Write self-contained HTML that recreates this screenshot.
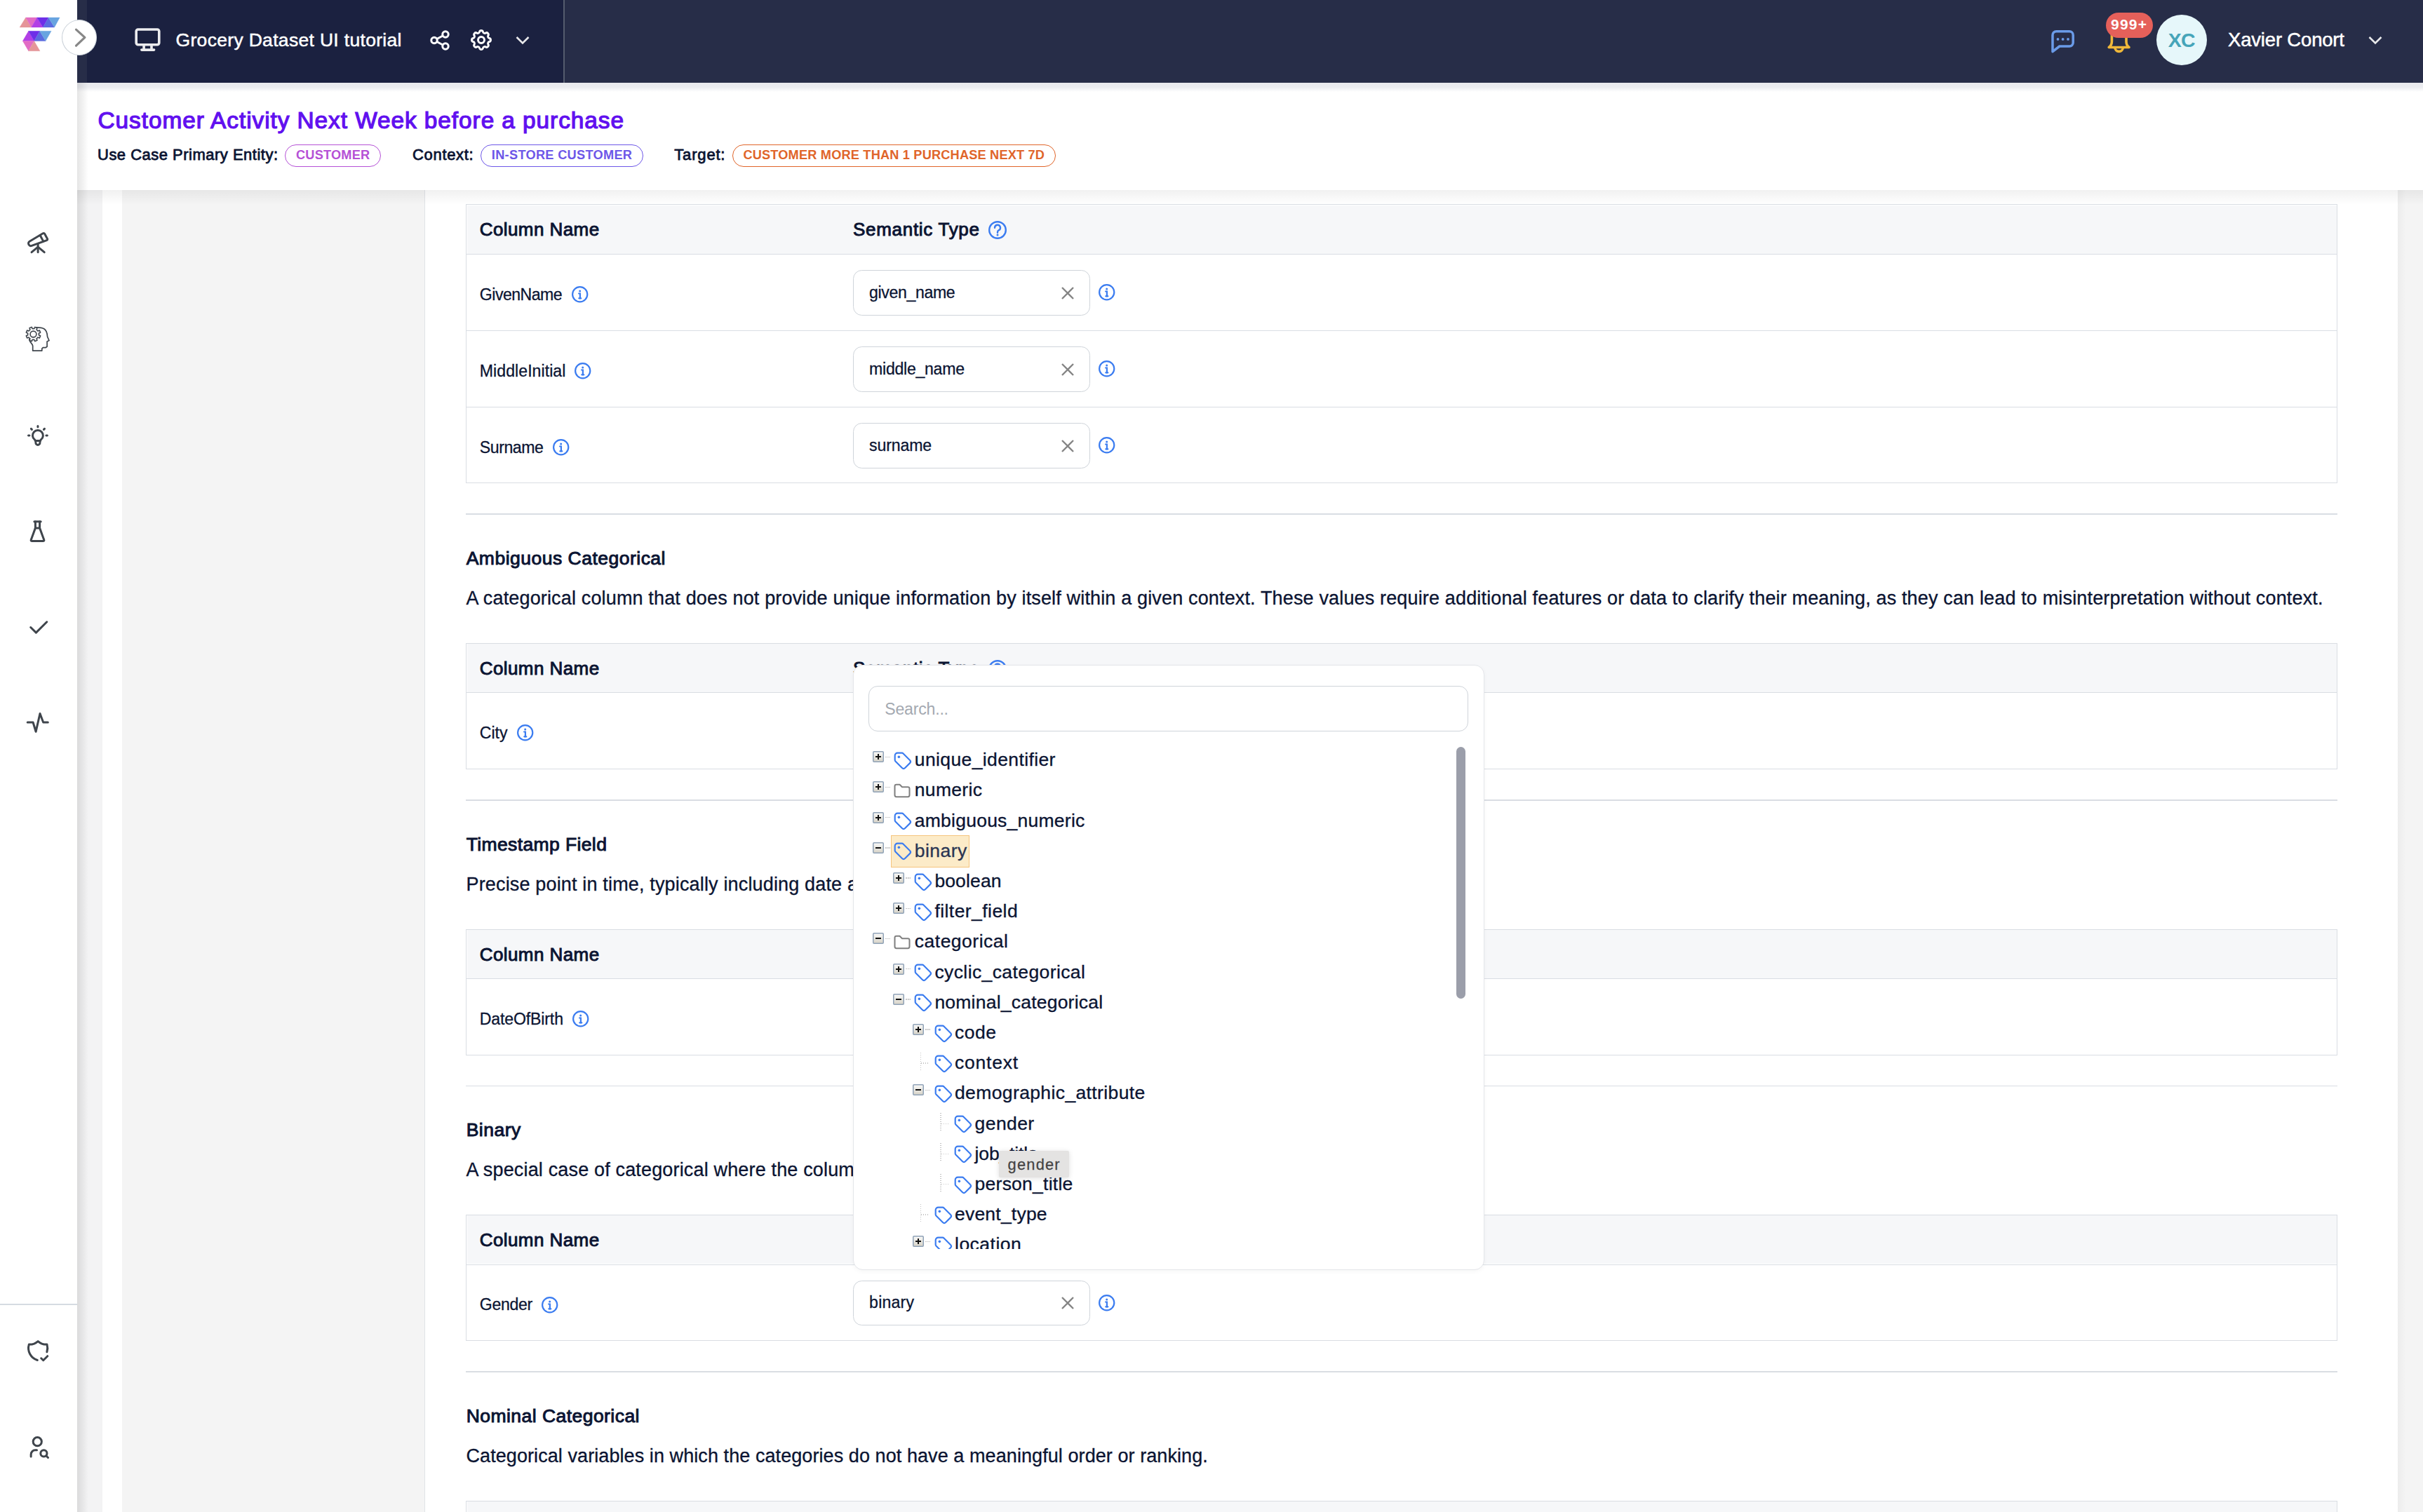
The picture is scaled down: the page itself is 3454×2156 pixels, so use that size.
<!DOCTYPE html>
<html><head><meta charset="utf-8"><style>
html,body{margin:0;padding:0}
body{width:3454px;height:2156px;overflow:hidden;position:relative;background:#fff;font-family:"Liberation Sans",sans-serif}
.t{position:absolute;white-space:nowrap}
.r{position:absolute}
</style></head><body>
<div class="r" style="left:110px;top:271px;width:36px;height:1885px;background:#f3f3f4"></div>
<div class="r" style="left:146px;top:271px;width:28px;height:1885px;background:#ffffff"></div>
<div class="r" style="left:174px;top:271px;width:431px;height:1885px;background:#f4f4f4;border-right:1.5px solid #e1e3e7"></div>
<div class="r" style="left:606.5px;top:271px;width:2811.5px;height:1885px;background:#ffffff"></div>
<div class="r" style="left:3418px;top:271px;width:36px;height:1885px;background:#f4f4f4"></div>
<div class="r" style="left:3418px;top:271px;width:12px;height:1885px;background:linear-gradient(90deg,rgba(0,0,0,0.03),rgba(0,0,0,0))"></div>
<div class="r" style="left:110px;top:271px;width:3344px;height:21px;background:linear-gradient(180deg,rgba(0,0,0,0.055),rgba(0,0,0,0))"></div>
<div class="r" style="left:664px;top:291.3px;width:2668px;height:397.99999999999994px;border:1.5px solid #d9dde3;box-sizing:border-box"></div>
<div class="r" style="left:665.5px;top:292.8px;width:2665.0px;height:69.09999999999997px;background:#f6f7f9"></div>
<div class="r" style="left:664px;top:361.9px;width:2668px;height:1.2000000000000455px;background:#d9dde3"></div>
<div id="t1" class="t" style="left:683.7px;top:314.20px;font-size:26px;line-height:26px;font-weight:400;color:#0b1432;letter-spacing:0.423px;-webkit-text-stroke:0.96px #0b1432;">Column Name</div>
<div id="t2" class="t" style="left:1216px;top:314.20px;font-size:26px;line-height:26px;font-weight:400;color:#0b1432;letter-spacing:0.707px;-webkit-text-stroke:0.96px #0b1432;">Semantic Type</div>
<svg class="r" style="left:1407.0px;top:313.3px;" width="30" height="30" viewBox="0 0 30 30" fill="none"><circle cx="15.0" cy="15.0" r="11.8" stroke="#3b7cf0" stroke-width="2.4"/><path d="M11.0 11.8a4 4 0 1 1 5.6 3.6c-1.2.6-1.6 1.2-1.6 2.6v.8" stroke="#3b7cf0" stroke-width="2.4" stroke-linecap="round"/><circle cx="15.0" cy="22.0" r="1.5" fill="#3b7cf0"/></svg>
<div id="t3" class="t" style="left:683.8px;top:408.67px;font-size:23.1px;line-height:23.1px;font-weight:400;color:#0b1432;letter-spacing:-0.505px;-webkit-text-stroke:0.28px #0b1432;">GivenName</div>
<svg class="r" style="left:812.6999999999999px;top:406.0px;" width="27.4" height="27.4" viewBox="0 0 27.4 27.4" fill="none"><circle cx="13.7" cy="13.7" r="10.6" stroke="#3b7cf0" stroke-width="2.2"/><circle cx="13.7" cy="9.1" r="1.5" fill="#3b7cf0"/><path d="M12.1 12.5h1.8v6.8" stroke="#3b7cf0" stroke-width="2.2" stroke-linecap="round"/><path d="M12.299999999999999 19.299999999999997h3" stroke="#3b7cf0" stroke-width="2.2" stroke-linecap="round"/></svg>
<div class="r" style="left:1216.3px;top:385.3px;width:337.29999999999995px;height:64.5px;border:1.6px solid #cfd4da;border-radius:12.5px;box-sizing:border-box;background:#fff"></div>
<div id="t4" class="t" style="left:1239.1px;top:405.67px;font-size:23.1px;line-height:23.1px;font-weight:400;color:#0b1432;letter-spacing:-0.359px;-webkit-text-stroke:0.28px #0b1432;">given_name</div>
<svg class="r" style="left:1511.5px;top:407.6px;" width="20" height="20" viewBox="0 0 20 20" fill="none"><path d="M2 2l16 16M18 2L2 18" stroke="#858585" stroke-width="2.4"/></svg>
<svg class="r" style="left:1563.6px;top:403.1px;" width="27.4" height="27.4" viewBox="0 0 27.4 27.4" fill="none"><circle cx="13.7" cy="13.7" r="10.6" stroke="#3b7cf0" stroke-width="2.2"/><circle cx="13.7" cy="9.1" r="1.5" fill="#3b7cf0"/><path d="M12.1 12.5h1.8v6.8" stroke="#3b7cf0" stroke-width="2.2" stroke-linecap="round"/><path d="M12.299999999999999 19.299999999999997h3" stroke="#3b7cf0" stroke-width="2.2" stroke-linecap="round"/></svg>
<div class="r" style="left:664px;top:470.55px;width:2668px;height:1.5px;background:#d9dde3"></div>
<div id="t5" class="t" style="left:683.8px;top:517.66px;font-size:23.1px;line-height:23.1px;font-weight:400;color:#0b1432;letter-spacing:0.054px;-webkit-text-stroke:0.28px #0b1432;">MiddleInitial</div>
<svg class="r" style="left:817.4px;top:514.9999999999999px;" width="27.4" height="27.4" viewBox="0 0 27.4 27.4" fill="none"><circle cx="13.7" cy="13.7" r="10.6" stroke="#3b7cf0" stroke-width="2.2"/><circle cx="13.7" cy="9.1" r="1.5" fill="#3b7cf0"/><path d="M12.1 12.5h1.8v6.8" stroke="#3b7cf0" stroke-width="2.2" stroke-linecap="round"/><path d="M12.299999999999999 19.299999999999997h3" stroke="#3b7cf0" stroke-width="2.2" stroke-linecap="round"/></svg>
<div class="r" style="left:1216.3px;top:494.3px;width:337.29999999999995px;height:64.49999999999994px;border:1.6px solid #cfd4da;border-radius:12.5px;box-sizing:border-box;background:#fff"></div>
<div id="t6" class="t" style="left:1239.1px;top:514.66px;font-size:23.1px;line-height:23.1px;font-weight:400;color:#0b1432;letter-spacing:-0.276px;-webkit-text-stroke:0.28px #0b1432;">middle_name</div>
<svg class="r" style="left:1511.5px;top:516.6px;" width="20" height="20" viewBox="0 0 20 20" fill="none"><path d="M2 2l16 16M18 2L2 18" stroke="#858585" stroke-width="2.4"/></svg>
<svg class="r" style="left:1563.6px;top:512.0999999999999px;" width="27.4" height="27.4" viewBox="0 0 27.4 27.4" fill="none"><circle cx="13.7" cy="13.7" r="10.6" stroke="#3b7cf0" stroke-width="2.2"/><circle cx="13.7" cy="9.1" r="1.5" fill="#3b7cf0"/><path d="M12.1 12.5h1.8v6.8" stroke="#3b7cf0" stroke-width="2.2" stroke-linecap="round"/><path d="M12.299999999999999 19.299999999999997h3" stroke="#3b7cf0" stroke-width="2.2" stroke-linecap="round"/></svg>
<div class="r" style="left:664px;top:579.55px;width:2668px;height:1.5px;background:#d9dde3"></div>
<div id="t7" class="t" style="left:683.8px;top:626.66px;font-size:23.1px;line-height:23.1px;font-weight:400;color:#0b1432;letter-spacing:-0.436px;-webkit-text-stroke:0.28px #0b1432;">Surname</div>
<svg class="r" style="left:785.9px;top:623.9999999999999px;" width="27.4" height="27.4" viewBox="0 0 27.4 27.4" fill="none"><circle cx="13.7" cy="13.7" r="10.6" stroke="#3b7cf0" stroke-width="2.2"/><circle cx="13.7" cy="9.1" r="1.5" fill="#3b7cf0"/><path d="M12.1 12.5h1.8v6.8" stroke="#3b7cf0" stroke-width="2.2" stroke-linecap="round"/><path d="M12.299999999999999 19.299999999999997h3" stroke="#3b7cf0" stroke-width="2.2" stroke-linecap="round"/></svg>
<div class="r" style="left:1216.3px;top:603.3px;width:337.29999999999995px;height:64.5px;border:1.6px solid #cfd4da;border-radius:12.5px;box-sizing:border-box;background:#fff"></div>
<div id="t8" class="t" style="left:1239.1px;top:623.66px;font-size:23.1px;line-height:23.1px;font-weight:400;color:#0b1432;letter-spacing:-0.143px;-webkit-text-stroke:0.28px #0b1432;">surname</div>
<svg class="r" style="left:1511.5px;top:625.5999999999999px;" width="20" height="20" viewBox="0 0 20 20" fill="none"><path d="M2 2l16 16M18 2L2 18" stroke="#858585" stroke-width="2.4"/></svg>
<svg class="r" style="left:1563.6px;top:621.0999999999999px;" width="27.4" height="27.4" viewBox="0 0 27.4 27.4" fill="none"><circle cx="13.7" cy="13.7" r="10.6" stroke="#3b7cf0" stroke-width="2.2"/><circle cx="13.7" cy="9.1" r="1.5" fill="#3b7cf0"/><path d="M12.1 12.5h1.8v6.8" stroke="#3b7cf0" stroke-width="2.2" stroke-linecap="round"/><path d="M12.299999999999999 19.299999999999997h3" stroke="#3b7cf0" stroke-width="2.2" stroke-linecap="round"/></svg>
<div class="r" style="left:664px;top:732.25px;width:2668px;height:1.5px;background:#d9dde3"></div>
<div id="t9" class="t" style="left:664.7px;top:782.77px;font-size:26.5px;line-height:26.5px;font-weight:400;color:#0b1432;letter-spacing:0.491px;-webkit-text-stroke:0.98px #0b1432;">Ambiguous Categorical</div>
<div id="t10" class="t" style="left:664.5px;top:840.05px;font-size:27px;line-height:27px;font-weight:400;color:#0b1432;letter-spacing:0.154px;-webkit-text-stroke:0.32px #0b1432;">A categorical column that does not provide unique information by itself within a given context. These values require additional features or data to clarify their meaning, as they can lead to misinterpretation without context.</div>
<div class="r" style="left:664px;top:916.6px;width:2668px;height:179.9999999999999px;border:1.5px solid #d9dde3;box-sizing:border-box"></div>
<div class="r" style="left:665.5px;top:918.1px;width:2665.0px;height:69.10000000000002px;background:#f6f7f9"></div>
<div class="r" style="left:664px;top:987.2px;width:2668px;height:1.1999999999999318px;background:#d9dde3"></div>
<div id="t11" class="t" style="left:683.7px;top:939.50px;font-size:26px;line-height:26px;font-weight:400;color:#0b1432;letter-spacing:0.423px;-webkit-text-stroke:0.96px #0b1432;">Column Name</div>
<div id="t12" class="t" style="left:1216px;top:939.50px;font-size:26px;line-height:26px;font-weight:400;color:#0b1432;letter-spacing:0.707px;-webkit-text-stroke:0.96px #0b1432;">Semantic Type</div>
<svg class="r" style="left:1407.0px;top:938.6px;" width="30" height="30" viewBox="0 0 30 30" fill="none"><circle cx="15.0" cy="15.0" r="11.8" stroke="#3b7cf0" stroke-width="2.4"/><path d="M11.0 11.8a4 4 0 1 1 5.6 3.6c-1.2.6-1.6 1.2-1.6 2.6v.8" stroke="#3b7cf0" stroke-width="2.4" stroke-linecap="round"/><circle cx="15.0" cy="22.0" r="1.5" fill="#3b7cf0"/></svg>
<div id="t13" class="t" style="left:683.8px;top:1033.96px;font-size:23.1px;line-height:23.1px;font-weight:400;color:#0b1432;letter-spacing:-0.027px;-webkit-text-stroke:0.28px #0b1432;">City</div>
<svg class="r" style="left:734.5px;top:1031.3px;" width="27.4" height="27.4" viewBox="0 0 27.4 27.4" fill="none"><circle cx="13.7" cy="13.7" r="10.6" stroke="#3b7cf0" stroke-width="2.2"/><circle cx="13.7" cy="9.1" r="1.5" fill="#3b7cf0"/><path d="M12.1 12.5h1.8v6.8" stroke="#3b7cf0" stroke-width="2.2" stroke-linecap="round"/><path d="M12.299999999999999 19.299999999999997h3" stroke="#3b7cf0" stroke-width="2.2" stroke-linecap="round"/></svg>
<div class="r" style="left:1216.3px;top:1010.6px;width:337.29999999999995px;height:64.49999999999989px;border:1.6px solid #cfd4da;border-radius:12.5px;box-sizing:border-box;background:#fff"></div>
<div id="t14" class="t" style="left:1239.1px;top:1030.96px;font-size:23.1px;line-height:23.1px;font-weight:400;color:#0b1432;letter-spacing:3.120px;-webkit-text-stroke:0.28px #0b1432;">city</div>
<svg class="r" style="left:1511.5px;top:1032.9px;" width="20" height="20" viewBox="0 0 20 20" fill="none"><path d="M2 2l16 16M18 2L2 18" stroke="#858585" stroke-width="2.4"/></svg>
<svg class="r" style="left:1563.6px;top:1028.3999999999999px;" width="27.4" height="27.4" viewBox="0 0 27.4 27.4" fill="none"><circle cx="13.7" cy="13.7" r="10.6" stroke="#3b7cf0" stroke-width="2.2"/><circle cx="13.7" cy="9.1" r="1.5" fill="#3b7cf0"/><path d="M12.1 12.5h1.8v6.8" stroke="#3b7cf0" stroke-width="2.2" stroke-linecap="round"/><path d="M12.299999999999999 19.299999999999997h3" stroke="#3b7cf0" stroke-width="2.2" stroke-linecap="round"/></svg>
<div class="r" style="left:664px;top:1140.25px;width:2668px;height:1.5px;background:#d9dde3"></div>
<div id="t15" class="t" style="left:664.7px;top:1190.77px;font-size:26.5px;line-height:26.5px;font-weight:400;color:#0b1432;letter-spacing:0.380px;-webkit-text-stroke:0.98px #0b1432;">Timestamp Field</div>
<div id="t16" class="t" style="left:664.5px;top:1248.05px;font-size:27px;line-height:27px;font-weight:400;color:#0b1432;letter-spacing:0.160px;-webkit-text-stroke:0.32px #0b1432;">Precise point in time, typically including date and time information.</div>
<div class="r" style="left:664px;top:1324.6px;width:2668px;height:180.0px;border:1.5px solid #d9dde3;box-sizing:border-box"></div>
<div class="r" style="left:665.5px;top:1326.1px;width:2665.0px;height:69.09999999999991px;background:#f6f7f9"></div>
<div class="r" style="left:664px;top:1395.1999999999998px;width:2668px;height:1.2000000000000455px;background:#d9dde3"></div>
<div id="t17" class="t" style="left:683.7px;top:1347.50px;font-size:26px;line-height:26px;font-weight:400;color:#0b1432;letter-spacing:0.423px;-webkit-text-stroke:0.96px #0b1432;">Column Name</div>
<div id="t18" class="t" style="left:1216px;top:1347.50px;font-size:26px;line-height:26px;font-weight:400;color:#0b1432;letter-spacing:0.707px;-webkit-text-stroke:0.96px #0b1432;">Semantic Type</div>
<svg class="r" style="left:1407.0px;top:1346.6px;" width="30" height="30" viewBox="0 0 30 30" fill="none"><circle cx="15.0" cy="15.0" r="11.8" stroke="#3b7cf0" stroke-width="2.4"/><path d="M11.0 11.8a4 4 0 1 1 5.6 3.6c-1.2.6-1.6 1.2-1.6 2.6v.8" stroke="#3b7cf0" stroke-width="2.4" stroke-linecap="round"/><circle cx="15.0" cy="22.0" r="1.5" fill="#3b7cf0"/></svg>
<div id="t19" class="t" style="left:683.8px;top:1441.96px;font-size:23.1px;line-height:23.1px;font-weight:400;color:#0b1432;letter-spacing:-0.146px;-webkit-text-stroke:0.28px #0b1432;">DateOfBirth</div>
<svg class="r" style="left:814.0px;top:1439.3px;" width="27.4" height="27.4" viewBox="0 0 27.4 27.4" fill="none"><circle cx="13.7" cy="13.7" r="10.6" stroke="#3b7cf0" stroke-width="2.2"/><circle cx="13.7" cy="9.1" r="1.5" fill="#3b7cf0"/><path d="M12.1 12.5h1.8v6.8" stroke="#3b7cf0" stroke-width="2.2" stroke-linecap="round"/><path d="M12.299999999999999 19.299999999999997h3" stroke="#3b7cf0" stroke-width="2.2" stroke-linecap="round"/></svg>
<div class="r" style="left:1216.3px;top:1418.6px;width:337.29999999999995px;height:64.5px;border:1.6px solid #cfd4da;border-radius:12.5px;box-sizing:border-box;background:#fff"></div>
<div id="t20" class="t" style="left:1239.1px;top:1438.96px;font-size:23.1px;line-height:23.1px;font-weight:400;color:#0b1432;letter-spacing:0.590px;-webkit-text-stroke:0.28px #0b1432;">timestamp_field</div>
<svg class="r" style="left:1511.5px;top:1440.8999999999999px;" width="20" height="20" viewBox="0 0 20 20" fill="none"><path d="M2 2l16 16M18 2L2 18" stroke="#858585" stroke-width="2.4"/></svg>
<svg class="r" style="left:1563.6px;top:1436.3999999999999px;" width="27.4" height="27.4" viewBox="0 0 27.4 27.4" fill="none"><circle cx="13.7" cy="13.7" r="10.6" stroke="#3b7cf0" stroke-width="2.2"/><circle cx="13.7" cy="9.1" r="1.5" fill="#3b7cf0"/><path d="M12.1 12.5h1.8v6.8" stroke="#3b7cf0" stroke-width="2.2" stroke-linecap="round"/><path d="M12.299999999999999 19.299999999999997h3" stroke="#3b7cf0" stroke-width="2.2" stroke-linecap="round"/></svg>
<div class="r" style="left:664px;top:1547.55px;width:2668px;height:1.5px;background:#d9dde3"></div>
<div id="t21" class="t" style="left:664.7px;top:1598.07px;font-size:26.5px;line-height:26.5px;font-weight:400;color:#0b1432;letter-spacing:0.495px;-webkit-text-stroke:0.98px #0b1432;">Binary</div>
<div id="t22" class="t" style="left:664.5px;top:1655.35px;font-size:27px;line-height:27px;font-weight:400;color:#0b1432;letter-spacing:0.160px;-webkit-text-stroke:0.32px #0b1432;">A special case of categorical where the column has only two distinct values.</div>
<div class="r" style="left:664px;top:1731.8999999999999px;width:2668px;height:180.0px;border:1.5px solid #d9dde3;box-sizing:border-box"></div>
<div class="r" style="left:665.5px;top:1733.3999999999999px;width:2665.0px;height:69.09999999999991px;background:#f6f7f9"></div>
<div class="r" style="left:664px;top:1802.4999999999998px;width:2668px;height:1.2000000000000455px;background:#d9dde3"></div>
<div id="t23" class="t" style="left:683.7px;top:1754.80px;font-size:26px;line-height:26px;font-weight:400;color:#0b1432;letter-spacing:0.423px;-webkit-text-stroke:0.96px #0b1432;">Column Name</div>
<div id="t24" class="t" style="left:1216px;top:1754.80px;font-size:26px;line-height:26px;font-weight:400;color:#0b1432;letter-spacing:0.707px;-webkit-text-stroke:0.96px #0b1432;">Semantic Type</div>
<svg class="r" style="left:1407.0px;top:1753.8999999999999px;" width="30" height="30" viewBox="0 0 30 30" fill="none"><circle cx="15.0" cy="15.0" r="11.8" stroke="#3b7cf0" stroke-width="2.4"/><path d="M11.0 11.8a4 4 0 1 1 5.6 3.6c-1.2.6-1.6 1.2-1.6 2.6v.8" stroke="#3b7cf0" stroke-width="2.4" stroke-linecap="round"/><circle cx="15.0" cy="22.0" r="1.5" fill="#3b7cf0"/></svg>
<div id="t25" class="t" style="left:683.8px;top:1849.26px;font-size:23.1px;line-height:23.1px;font-weight:400;color:#0b1432;letter-spacing:-0.306px;-webkit-text-stroke:0.28px #0b1432;">Gender</div>
<svg class="r" style="left:770.3px;top:1846.6px;" width="27.4" height="27.4" viewBox="0 0 27.4 27.4" fill="none"><circle cx="13.7" cy="13.7" r="10.6" stroke="#3b7cf0" stroke-width="2.2"/><circle cx="13.7" cy="9.1" r="1.5" fill="#3b7cf0"/><path d="M12.1 12.5h1.8v6.8" stroke="#3b7cf0" stroke-width="2.2" stroke-linecap="round"/><path d="M12.299999999999999 19.299999999999997h3" stroke="#3b7cf0" stroke-width="2.2" stroke-linecap="round"/></svg>
<div class="r" style="left:1216.3px;top:1825.8999999999999px;width:337.29999999999995px;height:64.5px;border:1.6px solid #cfd4da;border-radius:12.5px;box-sizing:border-box;background:#fff"></div>
<div id="t26" class="t" style="left:1239.1px;top:1846.26px;font-size:23.1px;line-height:23.1px;font-weight:400;color:#0b1432;letter-spacing:0.199px;-webkit-text-stroke:0.28px #0b1432;">binary</div>
<svg class="r" style="left:1511.5px;top:1848.1999999999998px;" width="20" height="20" viewBox="0 0 20 20" fill="none"><path d="M2 2l16 16M18 2L2 18" stroke="#858585" stroke-width="2.4"/></svg>
<svg class="r" style="left:1563.6px;top:1843.6999999999998px;" width="27.4" height="27.4" viewBox="0 0 27.4 27.4" fill="none"><circle cx="13.7" cy="13.7" r="10.6" stroke="#3b7cf0" stroke-width="2.2"/><circle cx="13.7" cy="9.1" r="1.5" fill="#3b7cf0"/><path d="M12.1 12.5h1.8v6.8" stroke="#3b7cf0" stroke-width="2.2" stroke-linecap="round"/><path d="M12.299999999999999 19.299999999999997h3" stroke="#3b7cf0" stroke-width="2.2" stroke-linecap="round"/></svg>
<div class="r" style="left:664px;top:1955.25px;width:2668px;height:1.5px;background:#d9dde3"></div>
<div id="t27" class="t" style="left:664.7px;top:2005.77px;font-size:26.5px;line-height:26.5px;font-weight:400;color:#0b1432;letter-spacing:0.455px;-webkit-text-stroke:0.98px #0b1432;">Nominal Categorical</div>
<div id="t28" class="t" style="left:664.5px;top:2063.05px;font-size:27px;line-height:27px;font-weight:400;color:#0b1432;letter-spacing:0.077px;-webkit-text-stroke:0.32px #0b1432;">Categorical variables in which the categories do not have a meaningful order or ranking.</div>
<div class="r" style="left:664px;top:2139.6px;width:2668px;height:180.0px;border:1.5px solid #d9dde3;box-sizing:border-box"></div>
<div class="r" style="left:665.5px;top:2141.1px;width:2665.0px;height:69.09999999999991px;background:#f6f7f9"></div>
<div class="r" style="left:664px;top:2210.2px;width:2668px;height:1.2000000000002728px;background:#d9dde3"></div>
<div id="t29" class="t" style="left:683.7px;top:2162.50px;font-size:26px;line-height:26px;font-weight:400;color:#0b1432;letter-spacing:0.423px;-webkit-text-stroke:0.96px #0b1432;">Column Name</div>
<div id="t30" class="t" style="left:1216px;top:2162.50px;font-size:26px;line-height:26px;font-weight:400;color:#0b1432;letter-spacing:0.707px;-webkit-text-stroke:0.96px #0b1432;">Semantic Type</div>
<svg class="r" style="left:1407.0px;top:2161.6px;" width="30" height="30" viewBox="0 0 30 30" fill="none"><circle cx="15.0" cy="15.0" r="11.8" stroke="#3b7cf0" stroke-width="2.4"/><path d="M11.0 11.8a4 4 0 1 1 5.6 3.6c-1.2.6-1.6 1.2-1.6 2.6v.8" stroke="#3b7cf0" stroke-width="2.4" stroke-linecap="round"/><circle cx="15.0" cy="22.0" r="1.5" fill="#3b7cf0"/></svg>
<div id="t31" class="t" style="left:683.8px;top:2256.96px;font-size:23.1px;line-height:23.1px;font-weight:400;color:#0b1432;letter-spacing:2.797px;-webkit-text-stroke:0.28px #0b1432;">Name</div>
<svg class="r" style="left:764.8px;top:2254.3px;" width="27.4" height="27.4" viewBox="0 0 27.4 27.4" fill="none"><circle cx="13.7" cy="13.7" r="10.6" stroke="#3b7cf0" stroke-width="2.2"/><circle cx="13.7" cy="9.1" r="1.5" fill="#3b7cf0"/><path d="M12.1 12.5h1.8v6.8" stroke="#3b7cf0" stroke-width="2.2" stroke-linecap="round"/><path d="M12.299999999999999 19.299999999999997h3" stroke="#3b7cf0" stroke-width="2.2" stroke-linecap="round"/></svg>
<div class="r" style="left:1216.3px;top:2233.6px;width:337.29999999999995px;height:64.5px;border:1.6px solid #cfd4da;border-radius:12.5px;box-sizing:border-box;background:#fff"></div>
<div id="t32" class="t" style="left:1239.1px;top:2253.96px;font-size:23.1px;line-height:23.1px;font-weight:400;color:#0b1432;letter-spacing:1.521px;-webkit-text-stroke:0.28px #0b1432;">nominal</div>
<svg class="r" style="left:1511.5px;top:2255.9px;" width="20" height="20" viewBox="0 0 20 20" fill="none"><path d="M2 2l16 16M18 2L2 18" stroke="#858585" stroke-width="2.4"/></svg>
<svg class="r" style="left:1563.6px;top:2251.4px;" width="27.4" height="27.4" viewBox="0 0 27.4 27.4" fill="none"><circle cx="13.7" cy="13.7" r="10.6" stroke="#3b7cf0" stroke-width="2.2"/><circle cx="13.7" cy="9.1" r="1.5" fill="#3b7cf0"/><path d="M12.1 12.5h1.8v6.8" stroke="#3b7cf0" stroke-width="2.2" stroke-linecap="round"/><path d="M12.299999999999999 19.299999999999997h3" stroke="#3b7cf0" stroke-width="2.2" stroke-linecap="round"/></svg>
<div class="r" style="left:1216.3px;top:948.4px;width:899.7px;height:862.6px;background:#fff;border:1.2px solid #e4e6ea;border-radius:14px;box-sizing:border-box;box-shadow:0 2px 6px rgba(0,0,0,0.04)"></div>
<div class="r" style="left:1238px;top:978.3px;width:854.5999999999999px;height:64.29999999999995px;border:1.5px solid #cfd4da;border-radius:13px;box-sizing:border-box"></div>
<div id="t33" class="t" style="left:1261.3px;top:1000.37px;font-size:23.1px;line-height:23.1px;font-weight:400;color:#a4a9b1;letter-spacing:-0.215px;">Search...</div>
<div class="r" style="left:2076px;top:1064.9px;width:13px;height:359.0999999999999px;background:#9b9eaa;border-radius:6.5px"></div>
<div class="r" style="left:0;top:1062px;width:3454px;height:719px;overflow:hidden"><div class="r" style="left:0;top:-1062px;width:3454px;height:2156px"><svg class="r" style="left:1244.2px;top:1071.2px;" width="16" height="16" viewBox="0 0 16 16" fill="none"><rect x="0.75" y="0.75" width="14.5" height="14.5" rx="1.2" fill="url(#eg)" stroke="#8fa2b7" stroke-width="1.5"/><path d="M4 8h8" stroke="#111" stroke-width="2"/><path d="M8 4v8" stroke="#111" stroke-width="2"/></svg>
<div class="r" style="left:1262.0px;top:1078.6px;width:7.0px;height:1.400000000000091px;background-image:linear-gradient(90deg,#c4c4c4 50%,transparent 50%);background-size:2.8px 1.4px"></div>
<svg class="r" style="left:1272.3px;top:1069.7px;" width="29.6" height="29.6" viewBox="0 0 24 24" fill="none"><path d="M3 6v5.172a2 2 0 0 0 .586 1.414l7.71 7.71a2.41 2.41 0 0 0 3.408 0l5.592-5.592a2.41 2.41 0 0 0 0-3.408l-7.71-7.71a2 2 0 0 0-1.414-.586h-5.172a3 3 0 0 0-3 3z" stroke="#3b7cf0" stroke-width="1.75" stroke-linejoin="round"/><circle cx="7.6" cy="7.6" r="1.45" fill="#3b7cf0"/></svg>
<div id="t34" class="t" style="left:1303.8px;top:1070.27px;font-size:26.5px;line-height:26.5px;font-weight:400;color:#0b1432;letter-spacing:0.382px;-webkit-text-stroke:0.32px #0b1432;">unique_identifier</div>
<svg class="r" style="left:1244.2px;top:1114.4px;" width="16" height="16" viewBox="0 0 16 16" fill="none"><rect x="0.75" y="0.75" width="14.5" height="14.5" rx="1.2" fill="url(#eg)" stroke="#8fa2b7" stroke-width="1.5"/><path d="M4 8h8" stroke="#111" stroke-width="2"/><path d="M8 4v8" stroke="#111" stroke-width="2"/></svg>
<div class="r" style="left:1262.0px;top:1121.8px;width:7.0px;height:1.400000000000091px;background-image:linear-gradient(90deg,#c4c4c4 50%,transparent 50%);background-size:2.8px 1.4px"></div>
<svg class="r" style="left:1272.0px;top:1113.5px;" width="28" height="28" viewBox="0 0 24 24" fill="none"><path d="M5 4h4l3 3h7a2 2 0 0 1 2 2v8a2 2 0 0 1-2 2h-14a2 2 0 0 1-2-2v-11a2 2 0 0 1 2-2" stroke="#808080" stroke-width="1.75" stroke-linejoin="round"/></svg>
<div id="t35" class="t" style="left:1303.8px;top:1113.47px;font-size:26.5px;line-height:26.5px;font-weight:400;color:#0b1432;letter-spacing:0.322px;-webkit-text-stroke:0.32px #0b1432;">numeric</div>
<svg class="r" style="left:1244.2px;top:1157.6000000000001px;" width="16" height="16" viewBox="0 0 16 16" fill="none"><rect x="0.75" y="0.75" width="14.5" height="14.5" rx="1.2" fill="url(#eg)" stroke="#8fa2b7" stroke-width="1.5"/><path d="M4 8h8" stroke="#111" stroke-width="2"/><path d="M8 4v8" stroke="#111" stroke-width="2"/></svg>
<div class="r" style="left:1262.0px;top:1165.0px;width:7.0px;height:1.400000000000091px;background-image:linear-gradient(90deg,#c4c4c4 50%,transparent 50%);background-size:2.8px 1.4px"></div>
<svg class="r" style="left:1272.3px;top:1156.1000000000001px;" width="29.6" height="29.6" viewBox="0 0 24 24" fill="none"><path d="M3 6v5.172a2 2 0 0 0 .586 1.414l7.71 7.71a2.41 2.41 0 0 0 3.408 0l5.592-5.592a2.41 2.41 0 0 0 0-3.408l-7.71-7.71a2 2 0 0 0-1.414-.586h-5.172a3 3 0 0 0-3 3z" stroke="#3b7cf0" stroke-width="1.75" stroke-linejoin="round"/><circle cx="7.6" cy="7.6" r="1.45" fill="#3b7cf0"/></svg>
<div id="t36" class="t" style="left:1303.8px;top:1156.67px;font-size:26.5px;line-height:26.5px;font-weight:400;color:#0b1432;letter-spacing:0.241px;-webkit-text-stroke:0.32px #0b1432;">ambiguous_numeric</div>
<div class="r" style="left:1270.2px;top:1190.7px;width:111.59999999999991px;height:46.299999999999955px;background:#fcebc8;border:1.5px solid #f5c47c;box-sizing:border-box"></div>
<svg class="r" style="left:1244.2px;top:1200.8000000000002px;" width="16" height="16" viewBox="0 0 16 16" fill="none"><rect x="0.75" y="0.75" width="14.5" height="14.5" rx="1.2" fill="url(#eg)" stroke="#8fa2b7" stroke-width="1.5"/><path d="M4 8h8" stroke="#111" stroke-width="2"/></svg>
<div class="r" style="left:1262.0px;top:1208.2px;width:7.0px;height:1.400000000000091px;background-image:linear-gradient(90deg,#c4c4c4 50%,transparent 50%);background-size:2.8px 1.4px"></div>
<svg class="r" style="left:1272.3px;top:1199.3000000000002px;" width="29.6" height="29.6" viewBox="0 0 24 24" fill="none"><path d="M3 6v5.172a2 2 0 0 0 .586 1.414l7.71 7.71a2.41 2.41 0 0 0 3.408 0l5.592-5.592a2.41 2.41 0 0 0 0-3.408l-7.71-7.71a2 2 0 0 0-1.414-.586h-5.172a3 3 0 0 0-3 3z" stroke="#3b7cf0" stroke-width="1.75" stroke-linejoin="round"/><circle cx="7.6" cy="7.6" r="1.45" fill="#3b7cf0"/></svg>
<div id="t37" class="t" style="left:1303.8px;top:1199.88px;font-size:26.5px;line-height:26.5px;font-weight:400;color:#2a3553;letter-spacing:0.463px;-webkit-text-stroke:0.32px #2a3553;">binary</div>
<svg class="r" style="left:1272.8px;top:1244.0px;" width="16" height="16" viewBox="0 0 16 16" fill="none"><rect x="0.75" y="0.75" width="14.5" height="14.5" rx="1.2" fill="url(#eg)" stroke="#8fa2b7" stroke-width="1.5"/><path d="M4 8h8" stroke="#111" stroke-width="2"/><path d="M8 4v8" stroke="#111" stroke-width="2"/></svg>
<div class="r" style="left:1290.6px;top:1251.3999999999999px;width:7.0px;height:1.400000000000091px;background-image:linear-gradient(90deg,#c4c4c4 50%,transparent 50%);background-size:2.8px 1.4px"></div>
<svg class="r" style="left:1300.8999999999999px;top:1242.5px;" width="29.6" height="29.6" viewBox="0 0 24 24" fill="none"><path d="M3 6v5.172a2 2 0 0 0 .586 1.414l7.71 7.71a2.41 2.41 0 0 0 3.408 0l5.592-5.592a2.41 2.41 0 0 0 0-3.408l-7.71-7.71a2 2 0 0 0-1.414-.586h-5.172a3 3 0 0 0-3 3z" stroke="#3b7cf0" stroke-width="1.75" stroke-linejoin="round"/><circle cx="7.6" cy="7.6" r="1.45" fill="#3b7cf0"/></svg>
<div id="t38" class="t" style="left:1332.3999999999999px;top:1243.07px;font-size:26.5px;line-height:26.5px;font-weight:400;color:#0b1432;letter-spacing:0.129px;-webkit-text-stroke:0.32px #0b1432;">boolean</div>
<svg class="r" style="left:1272.8px;top:1287.2px;" width="16" height="16" viewBox="0 0 16 16" fill="none"><rect x="0.75" y="0.75" width="14.5" height="14.5" rx="1.2" fill="url(#eg)" stroke="#8fa2b7" stroke-width="1.5"/><path d="M4 8h8" stroke="#111" stroke-width="2"/><path d="M8 4v8" stroke="#111" stroke-width="2"/></svg>
<div class="r" style="left:1290.6px;top:1294.6px;width:7.0px;height:1.400000000000091px;background-image:linear-gradient(90deg,#c4c4c4 50%,transparent 50%);background-size:2.8px 1.4px"></div>
<svg class="r" style="left:1300.8999999999999px;top:1285.7px;" width="29.6" height="29.6" viewBox="0 0 24 24" fill="none"><path d="M3 6v5.172a2 2 0 0 0 .586 1.414l7.71 7.71a2.41 2.41 0 0 0 3.408 0l5.592-5.592a2.41 2.41 0 0 0 0-3.408l-7.71-7.71a2 2 0 0 0-1.414-.586h-5.172a3 3 0 0 0-3 3z" stroke="#3b7cf0" stroke-width="1.75" stroke-linejoin="round"/><circle cx="7.6" cy="7.6" r="1.45" fill="#3b7cf0"/></svg>
<div id="t39" class="t" style="left:1332.3999999999999px;top:1286.27px;font-size:26.5px;line-height:26.5px;font-weight:400;color:#0b1432;letter-spacing:0.443px;-webkit-text-stroke:0.32px #0b1432;">filter_field</div>
<svg class="r" style="left:1244.2px;top:1330.4px;" width="16" height="16" viewBox="0 0 16 16" fill="none"><rect x="0.75" y="0.75" width="14.5" height="14.5" rx="1.2" fill="url(#eg)" stroke="#8fa2b7" stroke-width="1.5"/><path d="M4 8h8" stroke="#111" stroke-width="2"/></svg>
<div class="r" style="left:1262.0px;top:1337.8px;width:7.0px;height:1.400000000000091px;background-image:linear-gradient(90deg,#c4c4c4 50%,transparent 50%);background-size:2.8px 1.4px"></div>
<svg class="r" style="left:1272.0px;top:1329.5px;" width="28" height="28" viewBox="0 0 24 24" fill="none"><path d="M5 4h4l3 3h7a2 2 0 0 1 2 2v8a2 2 0 0 1-2 2h-14a2 2 0 0 1-2-2v-11a2 2 0 0 1 2-2" stroke="#808080" stroke-width="1.75" stroke-linejoin="round"/></svg>
<div id="t40" class="t" style="left:1303.8px;top:1329.47px;font-size:26.5px;line-height:26.5px;font-weight:400;color:#0b1432;letter-spacing:0.494px;-webkit-text-stroke:0.32px #0b1432;">categorical</div>
<svg class="r" style="left:1272.8px;top:1373.6000000000001px;" width="16" height="16" viewBox="0 0 16 16" fill="none"><rect x="0.75" y="0.75" width="14.5" height="14.5" rx="1.2" fill="url(#eg)" stroke="#8fa2b7" stroke-width="1.5"/><path d="M4 8h8" stroke="#111" stroke-width="2"/><path d="M8 4v8" stroke="#111" stroke-width="2"/></svg>
<div class="r" style="left:1290.6px;top:1381.0px;width:7.0px;height:1.400000000000091px;background-image:linear-gradient(90deg,#c4c4c4 50%,transparent 50%);background-size:2.8px 1.4px"></div>
<svg class="r" style="left:1300.8999999999999px;top:1372.1000000000001px;" width="29.6" height="29.6" viewBox="0 0 24 24" fill="none"><path d="M3 6v5.172a2 2 0 0 0 .586 1.414l7.71 7.71a2.41 2.41 0 0 0 3.408 0l5.592-5.592a2.41 2.41 0 0 0 0-3.408l-7.71-7.71a2 2 0 0 0-1.414-.586h-5.172a3 3 0 0 0-3 3z" stroke="#3b7cf0" stroke-width="1.75" stroke-linejoin="round"/><circle cx="7.6" cy="7.6" r="1.45" fill="#3b7cf0"/></svg>
<div id="t41" class="t" style="left:1332.3999999999999px;top:1372.67px;font-size:26.5px;line-height:26.5px;font-weight:400;color:#0b1432;letter-spacing:0.402px;-webkit-text-stroke:0.32px #0b1432;">cyclic_categorical</div>
<svg class="r" style="left:1272.8px;top:1416.8000000000002px;" width="16" height="16" viewBox="0 0 16 16" fill="none"><rect x="0.75" y="0.75" width="14.5" height="14.5" rx="1.2" fill="url(#eg)" stroke="#8fa2b7" stroke-width="1.5"/><path d="M4 8h8" stroke="#111" stroke-width="2"/></svg>
<div class="r" style="left:1290.6px;top:1424.2px;width:7.0px;height:1.400000000000091px;background-image:linear-gradient(90deg,#c4c4c4 50%,transparent 50%);background-size:2.8px 1.4px"></div>
<svg class="r" style="left:1300.8999999999999px;top:1415.3000000000002px;" width="29.6" height="29.6" viewBox="0 0 24 24" fill="none"><path d="M3 6v5.172a2 2 0 0 0 .586 1.414l7.71 7.71a2.41 2.41 0 0 0 3.408 0l5.592-5.592a2.41 2.41 0 0 0 0-3.408l-7.71-7.71a2 2 0 0 0-1.414-.586h-5.172a3 3 0 0 0-3 3z" stroke="#3b7cf0" stroke-width="1.75" stroke-linejoin="round"/><circle cx="7.6" cy="7.6" r="1.45" fill="#3b7cf0"/></svg>
<div id="t42" class="t" style="left:1332.3999999999999px;top:1415.88px;font-size:26.5px;line-height:26.5px;font-weight:400;color:#0b1432;letter-spacing:0.222px;-webkit-text-stroke:0.32px #0b1432;">nominal_categorical</div>
<svg class="r" style="left:1301.4px;top:1460.0px;" width="16" height="16" viewBox="0 0 16 16" fill="none"><rect x="0.75" y="0.75" width="14.5" height="14.5" rx="1.2" fill="url(#eg)" stroke="#8fa2b7" stroke-width="1.5"/><path d="M4 8h8" stroke="#111" stroke-width="2"/><path d="M8 4v8" stroke="#111" stroke-width="2"/></svg>
<div class="r" style="left:1319.2px;top:1467.3999999999999px;width:7.0px;height:1.400000000000091px;background-image:linear-gradient(90deg,#c4c4c4 50%,transparent 50%);background-size:2.8px 1.4px"></div>
<svg class="r" style="left:1329.5px;top:1458.5px;" width="29.6" height="29.6" viewBox="0 0 24 24" fill="none"><path d="M3 6v5.172a2 2 0 0 0 .586 1.414l7.71 7.71a2.41 2.41 0 0 0 3.408 0l5.592-5.592a2.41 2.41 0 0 0 0-3.408l-7.71-7.71a2 2 0 0 0-1.414-.586h-5.172a3 3 0 0 0-3 3z" stroke="#3b7cf0" stroke-width="1.75" stroke-linejoin="round"/><circle cx="7.6" cy="7.6" r="1.45" fill="#3b7cf0"/></svg>
<div id="t43" class="t" style="left:1361.0px;top:1459.07px;font-size:26.5px;line-height:26.5px;font-weight:400;color:#0b1432;letter-spacing:0.544px;-webkit-text-stroke:0.32px #0b1432;">code</div>
<div class="r" style="left:1311.5px;top:1500.8px;width:1.5px;height:27.0px;background-image:linear-gradient(180deg,#c4c4c4 50%,transparent 50%);background-size:1.5px 3px"></div>
<div class="r" style="left:1313.0px;top:1515.2px;width:11.5px;height:1.3999999999998636px;background-image:linear-gradient(90deg,#c4c4c4 50%,transparent 50%);background-size:3px 1.4px"></div>
<svg class="r" style="left:1329.5px;top:1501.7px;" width="29.6" height="29.6" viewBox="0 0 24 24" fill="none"><path d="M3 6v5.172a2 2 0 0 0 .586 1.414l7.71 7.71a2.41 2.41 0 0 0 3.408 0l5.592-5.592a2.41 2.41 0 0 0 0-3.408l-7.71-7.71a2 2 0 0 0-1.414-.586h-5.172a3 3 0 0 0-3 3z" stroke="#3b7cf0" stroke-width="1.75" stroke-linejoin="round"/><circle cx="7.6" cy="7.6" r="1.45" fill="#3b7cf0"/></svg>
<div id="t44" class="t" style="left:1361.0px;top:1502.27px;font-size:26.5px;line-height:26.5px;font-weight:400;color:#0b1432;letter-spacing:0.774px;-webkit-text-stroke:0.32px #0b1432;">context</div>
<svg class="r" style="left:1301.4px;top:1546.4px;" width="16" height="16" viewBox="0 0 16 16" fill="none"><rect x="0.75" y="0.75" width="14.5" height="14.5" rx="1.2" fill="url(#eg)" stroke="#8fa2b7" stroke-width="1.5"/><path d="M4 8h8" stroke="#111" stroke-width="2"/></svg>
<div class="r" style="left:1319.2px;top:1553.8px;width:7.0px;height:1.400000000000091px;background-image:linear-gradient(90deg,#c4c4c4 50%,transparent 50%);background-size:2.8px 1.4px"></div>
<svg class="r" style="left:1329.5px;top:1544.9px;" width="29.6" height="29.6" viewBox="0 0 24 24" fill="none"><path d="M3 6v5.172a2 2 0 0 0 .586 1.414l7.71 7.71a2.41 2.41 0 0 0 3.408 0l5.592-5.592a2.41 2.41 0 0 0 0-3.408l-7.71-7.71a2 2 0 0 0-1.414-.586h-5.172a3 3 0 0 0-3 3z" stroke="#3b7cf0" stroke-width="1.75" stroke-linejoin="round"/><circle cx="7.6" cy="7.6" r="1.45" fill="#3b7cf0"/></svg>
<div id="t45" class="t" style="left:1361.0px;top:1545.47px;font-size:26.5px;line-height:26.5px;font-weight:400;color:#0b1432;letter-spacing:0.380px;-webkit-text-stroke:0.32px #0b1432;">demographic_attribute</div>
<div class="r" style="left:1340.1px;top:1587.2px;width:1.5px;height:27.0px;background-image:linear-gradient(180deg,#c4c4c4 50%,transparent 50%);background-size:1.5px 3px"></div>
<div class="r" style="left:1341.6px;top:1601.6000000000001px;width:11.5px;height:1.3999999999998636px;background-image:linear-gradient(90deg,#c4c4c4 50%,transparent 50%);background-size:3px 1.4px"></div>
<svg class="r" style="left:1358.1px;top:1588.1000000000001px;" width="29.6" height="29.6" viewBox="0 0 24 24" fill="none"><path d="M3 6v5.172a2 2 0 0 0 .586 1.414l7.71 7.71a2.41 2.41 0 0 0 3.408 0l5.592-5.592a2.41 2.41 0 0 0 0-3.408l-7.71-7.71a2 2 0 0 0-1.414-.586h-5.172a3 3 0 0 0-3 3z" stroke="#3b7cf0" stroke-width="1.75" stroke-linejoin="round"/><circle cx="7.6" cy="7.6" r="1.45" fill="#3b7cf0"/></svg>
<div id="t46" class="t" style="left:1389.6px;top:1588.67px;font-size:26.5px;line-height:26.5px;font-weight:400;color:#0b1432;letter-spacing:0.417px;-webkit-text-stroke:0.32px #0b1432;">gender</div>
<div class="r" style="left:1340.1px;top:1630.4px;width:1.5px;height:27.0px;background-image:linear-gradient(180deg,#c4c4c4 50%,transparent 50%);background-size:1.5px 3px"></div>
<div class="r" style="left:1341.6px;top:1644.8000000000002px;width:11.5px;height:1.3999999999998636px;background-image:linear-gradient(90deg,#c4c4c4 50%,transparent 50%);background-size:3px 1.4px"></div>
<svg class="r" style="left:1358.1px;top:1631.3000000000002px;" width="29.6" height="29.6" viewBox="0 0 24 24" fill="none"><path d="M3 6v5.172a2 2 0 0 0 .586 1.414l7.71 7.71a2.41 2.41 0 0 0 3.408 0l5.592-5.592a2.41 2.41 0 0 0 0-3.408l-7.71-7.71a2 2 0 0 0-1.414-.586h-5.172a3 3 0 0 0-3 3z" stroke="#3b7cf0" stroke-width="1.75" stroke-linejoin="round"/><circle cx="7.6" cy="7.6" r="1.45" fill="#3b7cf0"/></svg>
<div id="t47" class="t" style="left:1389.6px;top:1631.88px;font-size:26.5px;line-height:26.5px;font-weight:400;color:#0b1432;letter-spacing:-0.168px;-webkit-text-stroke:0.32px #0b1432;">job_title</div>
<div class="r" style="left:1340.1px;top:1673.6px;width:1.5px;height:27.0px;background-image:linear-gradient(180deg,#c4c4c4 50%,transparent 50%);background-size:1.5px 3px"></div>
<div class="r" style="left:1341.6px;top:1688.0px;width:11.5px;height:1.3999999999998636px;background-image:linear-gradient(90deg,#c4c4c4 50%,transparent 50%);background-size:3px 1.4px"></div>
<svg class="r" style="left:1358.1px;top:1674.5px;" width="29.6" height="29.6" viewBox="0 0 24 24" fill="none"><path d="M3 6v5.172a2 2 0 0 0 .586 1.414l7.71 7.71a2.41 2.41 0 0 0 3.408 0l5.592-5.592a2.41 2.41 0 0 0 0-3.408l-7.71-7.71a2 2 0 0 0-1.414-.586h-5.172a3 3 0 0 0-3 3z" stroke="#3b7cf0" stroke-width="1.75" stroke-linejoin="round"/><circle cx="7.6" cy="7.6" r="1.45" fill="#3b7cf0"/></svg>
<div id="t48" class="t" style="left:1389.6px;top:1675.07px;font-size:26.5px;line-height:26.5px;font-weight:400;color:#0b1432;letter-spacing:0.244px;-webkit-text-stroke:0.32px #0b1432;">person_title</div>
<div class="r" style="left:1311.5px;top:1716.8px;width:1.5px;height:27.0px;background-image:linear-gradient(180deg,#c4c4c4 50%,transparent 50%);background-size:1.5px 3px"></div>
<div class="r" style="left:1313.0px;top:1731.2px;width:11.5px;height:1.3999999999998636px;background-image:linear-gradient(90deg,#c4c4c4 50%,transparent 50%);background-size:3px 1.4px"></div>
<svg class="r" style="left:1329.5px;top:1717.7px;" width="29.6" height="29.6" viewBox="0 0 24 24" fill="none"><path d="M3 6v5.172a2 2 0 0 0 .586 1.414l7.71 7.71a2.41 2.41 0 0 0 3.408 0l5.592-5.592a2.41 2.41 0 0 0 0-3.408l-7.71-7.71a2 2 0 0 0-1.414-.586h-5.172a3 3 0 0 0-3 3z" stroke="#3b7cf0" stroke-width="1.75" stroke-linejoin="round"/><circle cx="7.6" cy="7.6" r="1.45" fill="#3b7cf0"/></svg>
<div id="t49" class="t" style="left:1361.0px;top:1718.27px;font-size:26.5px;line-height:26.5px;font-weight:400;color:#0b1432;letter-spacing:0.216px;-webkit-text-stroke:0.32px #0b1432;">event_type</div>
<svg class="r" style="left:1301.4px;top:1762.4px;" width="16" height="16" viewBox="0 0 16 16" fill="none"><rect x="0.75" y="0.75" width="14.5" height="14.5" rx="1.2" fill="url(#eg)" stroke="#8fa2b7" stroke-width="1.5"/><path d="M4 8h8" stroke="#111" stroke-width="2"/><path d="M8 4v8" stroke="#111" stroke-width="2"/></svg>
<div class="r" style="left:1319.2px;top:1769.8px;width:7.0px;height:1.400000000000091px;background-image:linear-gradient(90deg,#c4c4c4 50%,transparent 50%);background-size:2.8px 1.4px"></div>
<svg class="r" style="left:1329.5px;top:1760.9px;" width="29.6" height="29.6" viewBox="0 0 24 24" fill="none"><path d="M3 6v5.172a2 2 0 0 0 .586 1.414l7.71 7.71a2.41 2.41 0 0 0 3.408 0l5.592-5.592a2.41 2.41 0 0 0 0-3.408l-7.71-7.71a2 2 0 0 0-1.414-.586h-5.172a3 3 0 0 0-3 3z" stroke="#3b7cf0" stroke-width="1.75" stroke-linejoin="round"/><circle cx="7.6" cy="7.6" r="1.45" fill="#3b7cf0"/></svg>
<div id="t50" class="t" style="left:1361.0px;top:1761.47px;font-size:26.5px;line-height:26.5px;font-weight:400;color:#0b1432;letter-spacing:0.494px;-webkit-text-stroke:0.32px #0b1432;">location</div></div></div>
<div class="r" style="left:1424px;top:1641.3px;width:100.29999999999995px;height:38.0px;background:#e4e3e2;border-radius:2px;box-shadow:0 1px 7px rgba(0,0,0,0.13)"></div>
<div id="t51" class="t" style="left:1436.6px;top:1649.87px;font-size:21.8px;line-height:21.8px;font-weight:400;color:#444444;letter-spacing:1.225px;-webkit-text-stroke:0.26px #444444;">gender</div>
<svg width="0" height="0" style="position:absolute"><defs><linearGradient id="eg" x1="0" y1="0" x2="0" y2="1"><stop offset="0" stop-color="#fbfbfa"/><stop offset="1" stop-color="#d6d2c6"/></linearGradient></defs></svg>
<div class="r" style="left:110px;top:118px;width:3344px;height:153px;background:#ffffff"></div>
<div class="r" style="left:110px;top:118px;width:3344px;height:13px;background:linear-gradient(180deg,#e9eaee 0px,#eaebef 6px,rgba(255,255,255,0) 13px)"></div>
<div id="t52" class="t" style="left:139.5px;top:154.71px;font-size:33.4px;line-height:33.4px;font-weight:400;color:#6110ef;letter-spacing:0.936px;-webkit-text-stroke:1.24px #6110ef;">Customer Activity Next Week before a purchase</div>
<div id="t53" class="t" style="left:139px;top:210.30px;font-size:22px;line-height:22px;font-weight:400;color:#0b1432;letter-spacing:0.490px;-webkit-text-stroke:0.81px #0b1432;">Use Case Primary Entity:</div>
<div id="t54" class="t" style="left:588px;top:210.30px;font-size:22px;line-height:22px;font-weight:400;color:#0b1432;letter-spacing:0.680px;-webkit-text-stroke:0.81px #0b1432;">Context:</div>
<div id="t55" class="t" style="left:961.3px;top:210.30px;font-size:22px;line-height:22px;font-weight:400;color:#0b1432;letter-spacing:0.822px;-webkit-text-stroke:0.81px #0b1432;">Target:</div>
<div class="r" style="left:406px;top:206.3px;width:137px;height:31.399999999999977px;border:1.6px solid #b551d6;border-radius:16px;box-sizing:border-box"></div><div id="t56" class="t" style="left:422px;top:211.83px;font-size:18.2px;line-height:18.2px;font-weight:700;color:#b551d6;letter-spacing:0.207px;">CUSTOMER</div>
<div class="r" style="left:685px;top:206.3px;width:231.60000000000002px;height:31.399999999999977px;border:1.6px solid #6d57e8;border-radius:16px;box-sizing:border-box"></div><div id="t57" class="t" style="left:700.8px;top:211.83px;font-size:18.2px;line-height:18.2px;font-weight:700;color:#6d57e8;letter-spacing:0.302px;">IN-STORE CUSTOMER</div>
<div class="r" style="left:1044.4px;top:206.3px;width:460.29999999999995px;height:31.399999999999977px;border:1.6px solid #e0652a;border-radius:16px;box-sizing:border-box"></div><div id="t58" class="t" style="left:1059.4px;top:211.83px;font-size:18.2px;line-height:18.2px;font-weight:700;color:#e0652a;letter-spacing:0.181px;">CUSTOMER MORE THAN 1 PURCHASE NEXT 7D</div>
<div class="r" style="left:110px;top:0px;width:3344px;height:118px;background:#272d48"></div>
<div class="r" style="left:124px;top:0px;width:679px;height:118px;background:#1b2140"></div>
<div class="r" style="left:803px;top:0px;width:1.5px;height:118px;background:#555c6e"></div>
<svg class="r" style="left:190px;top:38px;" width="42" height="38" viewBox="0 0 42 38" fill="none"><rect x="4.2" y="4" width="32.6" height="21.7" rx="2.6" stroke="#ececee" stroke-width="3.6"/><path d="M15.1 27v6M26 27v6M11.8 33.1h17.8" stroke="#ececee" stroke-width="3.6" stroke-linecap="round"/></svg>
<div id="t59" class="t" style="left:250.5px;top:43.57px;font-size:26.5px;line-height:26.5px;font-weight:400;color:#ffffff;letter-spacing:0.319px;-webkit-text-stroke:0.5px #fff;">Grocery Dataset UI tutorial</div>
<svg class="r" style="left:612px;top:42px;" width="30" height="31" viewBox="0 0 30 31" fill="none"><circle cx="7" cy="15.5" r="4.2" stroke="#fff" stroke-width="3"/><circle cx="23" cy="7" r="4.2" stroke="#fff" stroke-width="3"/><circle cx="23" cy="24" r="4.2" stroke="#fff" stroke-width="3"/><path d="M10.8 13.5l8.4-4.5M10.8 17.5l8.4 4.5" stroke="#fff" stroke-width="3"/></svg>
<svg class="r" style="left:668px;top:39px;" width="36" height="36" viewBox="0 0 24 24" fill="none"><path d="M10.325 4.317c.426-1.756 2.924-1.756 3.35 0a1.724 1.724 0 0 0 2.573 1.066c1.543-.94 3.31.826 2.37 2.37a1.724 1.724 0 0 0 1.065 2.572c1.756.426 1.756 2.924 0 3.35a1.724 1.724 0 0 0-1.066 2.573c.94 1.543-.826 3.31-2.37 2.37a1.724 1.724 0 0 0-2.572 1.065c-.426 1.756-2.924 1.756-3.35 0a1.724 1.724 0 0 0-2.573-1.066c-1.543.94-3.31-.826-2.37-2.37a1.724 1.724 0 0 0-1.065-2.572c-1.756-.426-1.756-2.924 0-3.35a1.724 1.724 0 0 0 1.066-2.573c-.94-1.543.826-3.31 2.37-2.37c1 .608 2.296.07 2.572-1.065z" stroke="#fff" stroke-width="1.95" stroke-linejoin="round"/><path d="M9 12a3 3 0 1 0 6 0a3 3 0 0 0-6 0" stroke="#fff" stroke-width="1.95"/></svg>
<svg class="r" style="left:734px;top:50px;" width="22" height="15" viewBox="0 0 22 15" fill="none"><path d="M2.5 3l8.5 8.5L19.5 3" stroke="#e8e8ea" stroke-width="2.6"/></svg>
<svg class="r" style="left:2922px;top:41px;" width="38" height="37" viewBox="0 0 38 37" fill="none"><path d="M4 9a5.2 5.2 0 0 1 5.2-5.2h18.8a5.2 5.2 0 0 1 5.2 5.2v10.8a5.2 5.2 0 0 1-5.2 5.2H13.8L4 32.6V9z" stroke="#6a9be8" stroke-width="3.5" stroke-linejoin="round"/><circle cx="11.5" cy="14.9" r="1.9" fill="#6a9be8"/><circle cx="18.6" cy="14.9" r="1.9" fill="#6a9be8"/><circle cx="26" cy="14.9" r="1.9" fill="#6a9be8"/></svg>
<svg class="r" style="left:2995px;top:30px;" width="50" height="50" viewBox="0 0 50 50" fill="none"><path d="M15.4 12V29.5C15.4 33.5 13.4 35.8 11.2 37.5H40C37.8 35.8 36 33.5 36 29.5V12" stroke="#f0b83a" stroke-width="3.6" stroke-linejoin="round"/><path d="M19.8 37.6a5.8 5.8 0 0 0 11.6 0" stroke="#f0b83a" stroke-width="3.6"/></svg>
<div class="r" style="left:3001.8px;top:17.7px;width:67.09999999999991px;height:36.5px;background:#e5605a;border-radius:18px"></div>
<div id="t60" class="t" style="left:3009px;top:24.15px;font-size:21px;line-height:21px;font-weight:700;color:#ffffff;letter-spacing:1.229px;">999+</div>
<div class="r" style="left:3074px;top:20.8px;width:72.30000000000018px;height:72.2px;background:#e6f7fa;border-radius:50%"></div>
<div id="t61" class="t" style="left:3090.8px;top:42.58px;font-size:28.5px;line-height:28.5px;font-weight:700;color:#46a5b9;letter-spacing:-0.794px;">XC</div>
<div id="t62" class="t" style="left:3176px;top:43.42px;font-size:27.5px;line-height:27.5px;font-weight:400;color:#ffffff;letter-spacing:-0.178px;-webkit-text-stroke:0.5px #fff;">Xavier Conort</div>
<svg class="r" style="left:3375px;top:50px;" width="22" height="15" viewBox="0 0 22 15" fill="none"><path d="M2.5 3l8.5 8.5L19.5 3" stroke="#e8e8ea" stroke-width="2.6"/></svg>
<div class="r" style="left:0px;top:0px;width:110px;height:2156px;background:#ffffff"></div>
<div class="r" style="left:110px;top:118px;width:16px;height:2038px;background:linear-gradient(90deg,rgba(0,0,0,0.10),rgba(0,0,0,0))"></div>
<div class="r" style="left:0px;top:1859px;width:110px;height:2px;background:#d5dbe2"></div>
<svg class="r" style="left:36.27px;top:327.86px;" width="36.25" height="36.25" viewBox="0 0 24 24" fill="none"><path d="M6 21l6-5l6 5" stroke="#3f454c" stroke-width="1.986" stroke-linecap="round" stroke-linejoin="round"/><path d="M12 13v8" stroke="#3f454c" stroke-width="1.986" stroke-linecap="round" stroke-linejoin="round"/><path d="M3.294 13.678l.166.281c.52.88 1.624 1.265 2.605.91l14.242-5.165a1.023 1.023 0 0 0 .565-1.456l-2.62-4.705a1.087 1.087 0 0 0-1.447-.42l-.056.032l-12.694 7.618c-1.02.613-1.357 1.897-.76 2.905z" stroke="#3f454c" stroke-width="1.986" stroke-linecap="round" stroke-linejoin="round"/><path d="M14 5l3 5.5" stroke="#3f454c" stroke-width="1.986" stroke-linecap="round" stroke-linejoin="round"/></svg>
<svg class="r" style="left:36.22px;top:602.62px;" width="35.87" height="35.87" viewBox="0 0 24 24" fill="none"><path d="M3 12h1m8-9v1m8 8h1m-15.4-6.4l.7.7m12.1-.7l-.7.7" stroke="#3f454c" stroke-width="2.007" stroke-linecap="round" stroke-linejoin="round"/><path d="M9 16a5 5 0 1 1 6 0a3.5 3.5 0 0 0-1 3a2 2 0 0 1-4 0a3.5 3.5 0 0 0-1-3" stroke="#3f454c" stroke-width="2.007" stroke-linecap="round" stroke-linejoin="round"/><path d="M9.7 17l4.6 0" stroke="#3f454c" stroke-width="2.007" stroke-linecap="round" stroke-linejoin="round"/></svg>
<svg class="r" style="left:35.24px;top:738.87px;" width="37.02" height="37.02" viewBox="0 0 24 24" fill="none"><path d="M9 3l6 0" stroke="#3f454c" stroke-width="1.945" stroke-linecap="round" stroke-linejoin="round"/><path d="M10 9l4 0" stroke="#3f454c" stroke-width="1.945" stroke-linecap="round" stroke-linejoin="round"/><path d="M10 3v6l-4 11a.7.7 0 0 0 .5 1h11a.7.7 0 0 0 .5-1l-4-11v-6" stroke="#3f454c" stroke-width="1.945" stroke-linecap="round" stroke-linejoin="round"/></svg>
<svg class="r" style="left:35.6px;top:875.72px;" width="36.96" height="36.96" viewBox="0 0 24 24" fill="none"><path d="M5 12l5 5l10-10" stroke="#3f454c" stroke-width="1.948" stroke-linecap="round" stroke-linejoin="round"/></svg>
<svg class="r" style="left:37px;top:1014px;" width="34" height="32" viewBox="0 0 34 32" fill="none"><path d="M2.2 16h7.9l4 13.3l5.9-25.8l4.7 12.5h6.6" stroke="#3f454c" stroke-width="3" stroke-linecap="round" stroke-linejoin="round"/></svg>
<svg class="r" style="left:35.51px;top:1907.66px;" width="36.31" height="36.31" viewBox="0 0 24 24" fill="none"><path d="M11.46 20.846a12 12 0 0 1-7.96-14.846a12 12 0 0 0 8.5-3a12 12 0 0 0 8.5 3a12 12 0 0 1-.09 7.06" stroke="#3f454c" stroke-width="1.983" stroke-linecap="round" stroke-linejoin="round"/><path d="M15 19l2 2l4-4" stroke="#3f454c" stroke-width="1.983" stroke-linecap="round" stroke-linejoin="round"/></svg>
<svg class="r" style="left:35.36px;top:2044.63px;" width="36.56" height="36.56" viewBox="0 0 24 24" fill="none"><path d="M8 7a4 4 0 1 0 8 0a4 4 0 0 0-8 0" stroke="#3f454c" stroke-width="1.969" stroke-linecap="round" stroke-linejoin="round"/><path d="M6 21v-2a4 4 0 0 1 4-4h1.5" stroke="#3f454c" stroke-width="1.969" stroke-linecap="round" stroke-linejoin="round"/><path d="M18 18m-3 0a3 3 0 1 0 6 0a3 3 0 1 0-6 0" stroke="#3f454c" stroke-width="1.969" stroke-linecap="round" stroke-linejoin="round"/><path d="M20.2 20.2l1.8 1.8" stroke="#3f454c" stroke-width="1.969" stroke-linecap="round" stroke-linejoin="round"/></svg>
<svg class="r" style="left:0px;top:440px;" width="110" height="80" viewBox="0 0 110 80" fill="none"><path d="M51.1 466.8L58.4 467.4C61.5 467.8 64.5 469.5 66.1 472.8C67.3 475.2 67.5 477.5 67.6 480.2L70 485.5L67.1 487L67.1 494.3L64.9 495.7L61.3 495.7L59.8 497.2L59.8 500.1L46.7 500.1L46.7 493.2C46.5 491.8 45.8 490.6 44.6 489.3C43 487.5 41.9 486 41.6 482.8" transform="translate(0 -440)" stroke="#3f454c" stroke-width="1.7" stroke-linejoin="round" fill="none"/><path d="M55.40 476.50L55.29 477.80L57.63 478.85L56.32 482.00L53.93 481.09L53.09 482.09L52.09 482.93L53.00 485.32L49.85 486.63L48.80 484.29L47.50 484.40L46.20 484.29L45.15 486.63L42.00 485.32L42.91 482.93L41.91 482.09L41.07 481.09L38.68 482.00L37.37 478.85L39.71 477.80L39.60 476.50L39.71 475.20L37.37 474.15L38.68 471.00L41.07 471.91L41.91 470.91L42.91 470.07L42.00 467.68L45.15 466.37L46.20 468.71L47.50 468.60L48.80 468.71L49.85 466.37L53.00 467.68L52.09 470.07L53.09 470.91L53.93 471.91L56.32 471.00L57.63 474.15L55.29 475.20Z" transform="translate(0 -440)" stroke="#3f454c" stroke-width="1.6" stroke-linejoin="round" fill="#fff"/><circle cx="47.5" cy="36.5" r="4.4" stroke="#3f454c" stroke-width="1.6"/></svg>
<svg class="r" style="left:0;top:0" width="110" height="90" viewBox="0 0 110 90"><polygon points="36.63,24.97 28.05,38.92 44.68,38.92" fill="#e59599" stroke="#e59599" stroke-width="0.3"/><polygon points="36.63,24.97 52.73,24.97 44.68,38.92" fill="#e26cc4" stroke="#e26cc4" stroke-width="0.3"/><polygon points="52.73,24.97 44.68,38.92 61.31,38.92" fill="#b23fe5" stroke="#b23fe5" stroke-width="0.3"/><polygon points="52.73,24.97 69.09,24.97 61.31,38.92" fill="#6e2ee8" stroke="#6e2ee8" stroke-width="0.3"/><polygon points="69.09,24.97 61.31,38.92 77.67,38.92" fill="#5b6be0" stroke="#5b6be0" stroke-width="0.3"/><polygon points="69.09,24.97 85.18,24.97 77.67,38.92" fill="#68a4e0" stroke="#68a4e0" stroke-width="0.3"/><polygon points="40.65,44.29 32.34,58.50 48.70,58.50" fill="#b23fe5" stroke="#b23fe5" stroke-width="0.3"/><polygon points="40.65,44.29 56.75,44.29 48.70,58.50" fill="#6e2ee8" stroke="#6e2ee8" stroke-width="0.3"/><polygon points="56.75,44.29 48.70,58.50 65.06,58.50" fill="#5b6be0" stroke="#5b6be0" stroke-width="0.3"/><polygon points="56.75,44.29 73.11,44.29 65.06,58.50" fill="#68a4e0" stroke="#68a4e0" stroke-width="0.3"/><polygon points="32.34,58.50 48.70,58.50 40.65,72.72" fill="#e26cc4" stroke="#e26cc4" stroke-width="0.3"/><polygon points="48.70,58.50 40.65,72.72 57.02,72.72" fill="#e59599" stroke="#e59599" stroke-width="0.3"/></svg>
<div class="r" style="left:88px;top:28px;width:50px;height:50.5px;background:#fff;border:1.2px solid #c8cfd7;border-radius:50%;box-sizing:border-box"></div>
<svg class="r" style="left:100px;top:38px;" width="26" height="32" viewBox="0 0 26 32" fill="none"><path d="M8.5 4.1L20.9 15.4L8.5 27.2" stroke="#878787" stroke-width="3.2" stroke-linecap="round" stroke-linejoin="round"/></svg>
</body></html>
